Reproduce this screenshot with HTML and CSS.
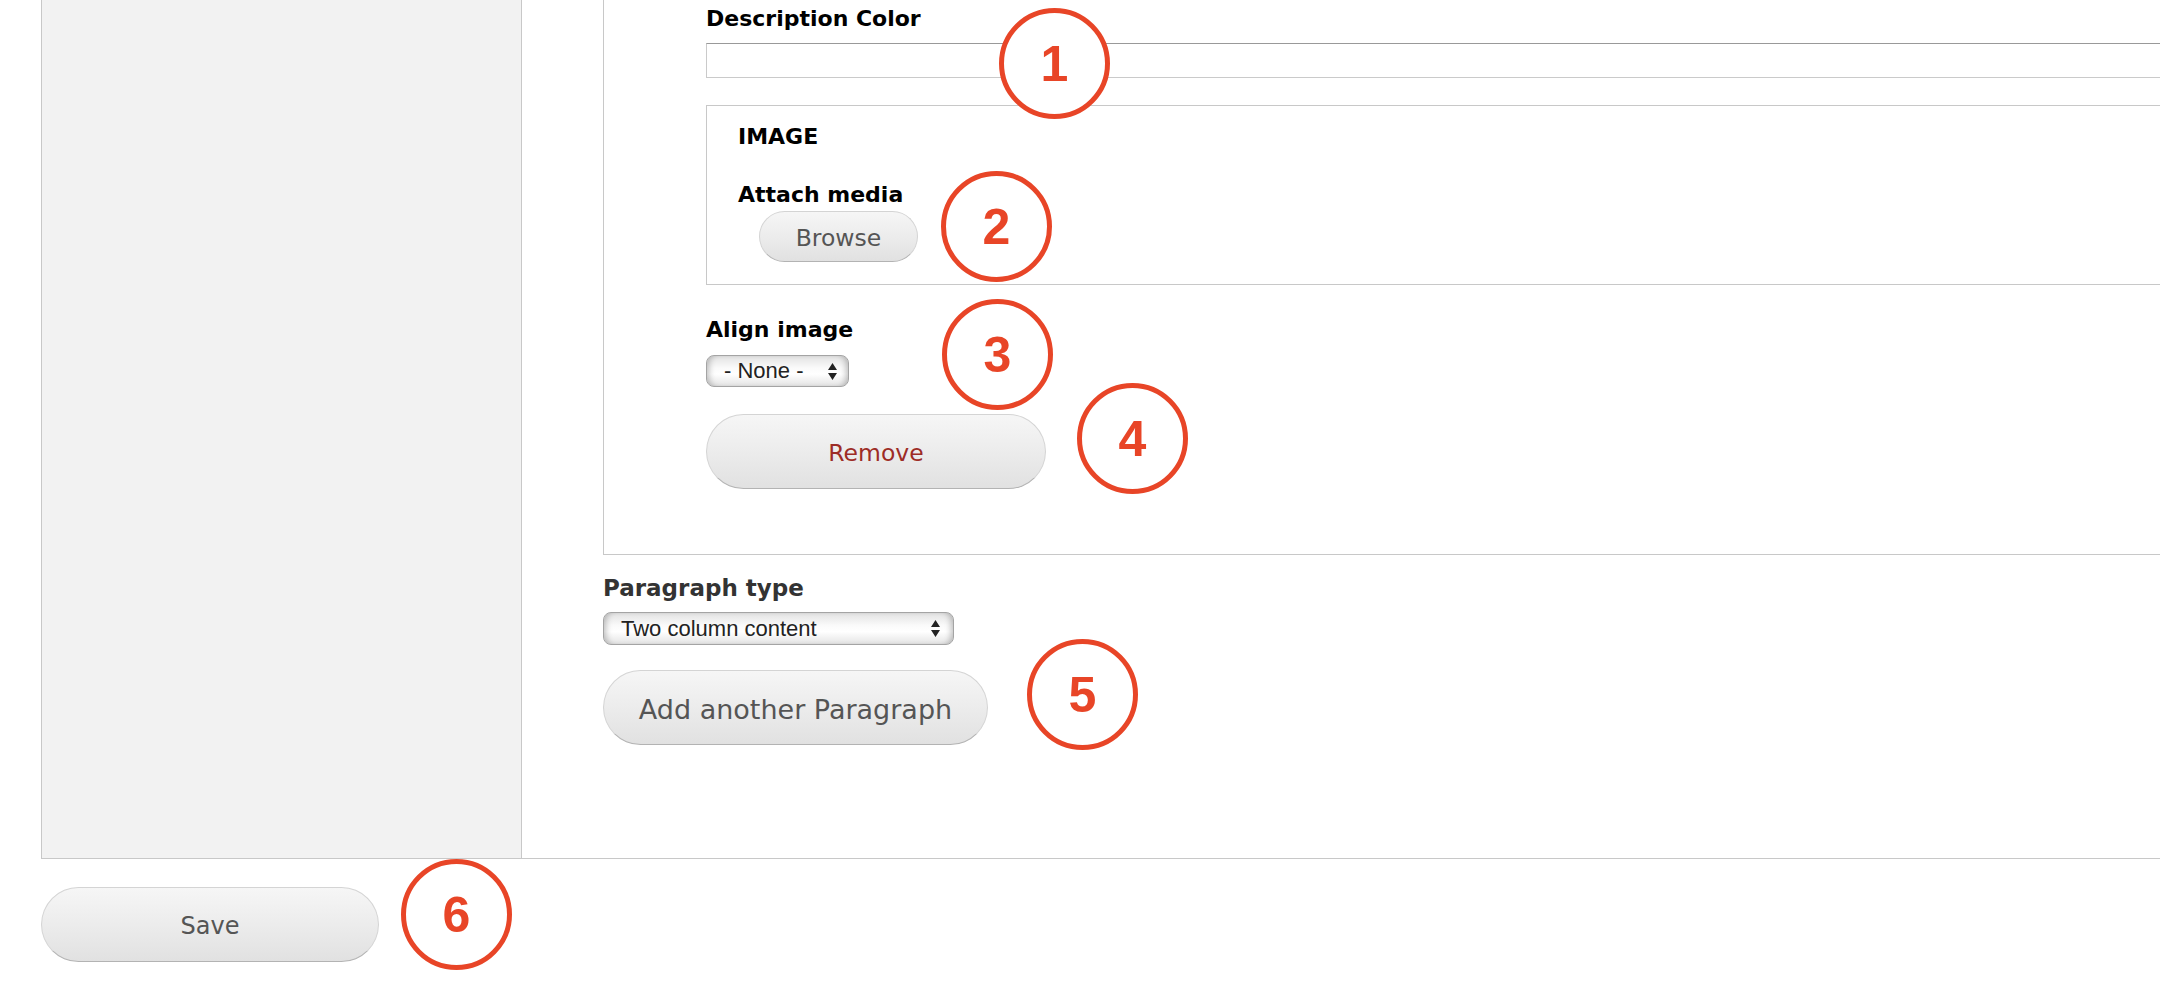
FILE: index.html
```html
<!DOCTYPE html>
<html lang="en">
<head>
    <meta charset="UTF-8">
    <title>Edit content</title>
    <link rel="stylesheet" href="styles.css">
</head>
<body>

<div class="page">
    <div class="layout">
        <!-- left column, empty in this part of the form -->
        <div class="sidebar"></div>

        <div class="main">
            <div class="item">
                <label class="field-label" for="descColor">Description Color</label>
                <input type="text" id="descColor" class="text-input">

                <div class="image-box">
                    <div class="field-label">IMAGE</div>
                    <div class="field-label attach">Attach media</div>
                    <button class="button browse" type="button">Browse</button>
                </div>

                <div class="field-label align-label">Align image</div>
                <div class="select select-small">
                    <span>- None -</span>
                    <svg width="9" height="17" viewBox="0 0 9 17"><path d="M4.5 0 L9 7 L0 7 Z M0 10 L9 10 L4.5 17 Z" fill="#222"/></svg>
                </div>

                <button class="button remove" type="button">Remove</button>
            </div>

            <div class="field-label type-label">Paragraph type</div>
            <div class="select select-wide">
                <span>Two column content</span>
                <svg width="9" height="17" viewBox="0 0 9 17"><path d="M4.5 0 L9 7 L0 7 Z M0 10 L9 10 L4.5 17 Z" fill="#222"/></svg>
            </div>

            <button class="button add" type="button">Add another Paragraph</button>
        </div>
    </div>

    <button class="button save" type="submit">Save</button>
</div>

<!-- numbered callouts drawn over the form -->
<div class="callout c1">1</div>
<div class="callout c2">2</div>
<div class="callout c3">3</div>
<div class="callout c4">4</div>
<div class="callout c5">5</div>
<div class="callout c6">6</div>

</body>
</html>
```

FILE: styles.css
```css
body {
    margin: 0;
    padding: 0;
    background: #fff;
    font-family: "DejaVu Sans", Verdana, sans-serif;
    overflow: hidden;
}

.page {
    padding-left: 41px;
    width: 2400px;
}

.layout {
    display: flex;
    border: 1px solid #c8c8c8;
    border-top: none;
}

.sidebar {
    width: 480px;
    flex: none;
    background-color: #f2f2f2;
    border-right: 1px solid #c8c8c8;
    box-sizing: border-box;
}

.main {
    flex: 1;
    padding: 0 0 113px 81px;
}

.item {
    border: 1px solid #c8c8c8;
    border-top: none;
    padding: 6px 40px 65px 102px;
}

.field-label {
    display: block;
    font-size: 22px;
    line-height: 26px;
    font-weight: bold;
    color: #000;
}

.text-input {
    display: block;
    box-sizing: border-box;
    width: 100%;
    height: 35px;
    margin: 11px 0 0 0;
    border: 1px solid #cacaca;
    border-top-color: #999;
    border-radius: 0;
    padding: 0;
    background: #fff;
}

.image-box {
    margin-top: 27px;
    border: 1px solid #c8c8c8;
    padding: 18px 30px 22px 31px;
}

.attach {
    margin-top: 32px;
}

.align-label {
    margin-top: 32px;
}

.type-label {
    margin-top: 20px;
    font-size: 23px;
    line-height: 27px;
    color: #333;
}

/* pill buttons */
.button {
    display: flex;
    align-items: center;
    justify-content: center;
    box-sizing: border-box;
    padding: 3px 0 0 0;
    border: 1px solid #d4d4d4;
    border-bottom-color: #b3b3b3;
    border-radius: 40px;
    background: linear-gradient(to bottom, #f6f6f6 0%, #ececec 50%, #e1e1e1 100%);
    font-family: "DejaVu Sans", Verdana, sans-serif;
    color: #555;
    cursor: pointer;
}

.browse {
    width: 159px;
    height: 51px;
    margin: 3px 0 0 21px;
    font-size: 23.5px;
}

.remove {
    width: 340px;
    height: 75px;
    margin-top: 27px;
    font-size: 23.5px;
    color: #9d2c26;
}

.add {
    width: 385px;
    height: 75px;
    margin-top: 25px;
    font-size: 27px;
}

.save {
    width: 338px;
    height: 75px;
    margin-top: 28px;
    font-size: 24px;
}

/* mac style selects */
.select {
    display: flex;
    align-items: center;
    box-sizing: border-box;
    border: 1px solid #a4a4a4;
    border-radius: 8px;
    background: linear-gradient(to bottom, #e2e2e2 0%, #fafafa 40%, #ffffff 60%, #e4e4e4 100%);
    box-shadow: inset 6px 0 6px -4px rgba(0, 0, 0, 0.25), inset -6px 0 6px -4px rgba(0, 0, 0, 0.25);
    font-family: "Liberation Sans", Arial, sans-serif;
    font-size: 22px;
    color: #222;
}

.select svg {
    margin-left: auto;
}

.select-small {
    width: 143px;
    height: 32px;
    margin-top: 12px;
    padding: 0 11px 0 17px;
}

.select-wide {
    width: 351px;
    height: 33px;
    margin-top: 10px;
    padding: 0 13px 0 17px;
}

/* annotation circles */
.callout {
    position: absolute;
    width: 111px;
    height: 111px;
    box-sizing: border-box;
    border: 5px solid #e84527;
    border-radius: 50%;
    background: #fff;
    display: flex;
    align-items: center;
    justify-content: center;
    font-family: "Liberation Sans", Arial, sans-serif;
    font-weight: bold;
    font-size: 50px;
    color: #e84527;
}

.c1 { left: 999px; top: 8px; }
.c2 { left: 941px; top: 171px; }
.c3 { left: 942px; top: 299px; }
.c4 { left: 1077px; top: 383px; }
.c5 { left: 1027px; top: 639px; }
.c6 { left: 401px; top: 859px; }
```
